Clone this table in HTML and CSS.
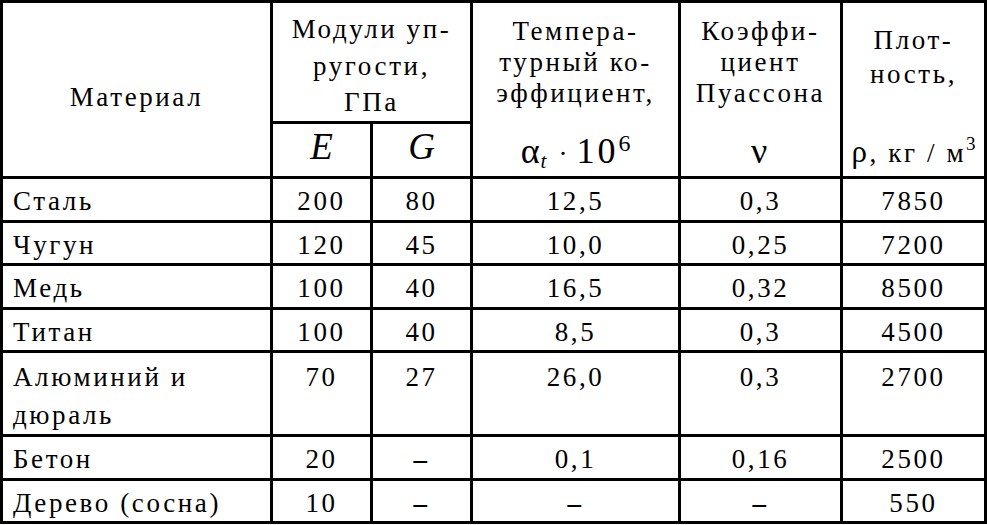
FILE: index.html
```html
<!DOCTYPE html>
<html lang="ru">
<head>
<meta charset="utf-8">
<title>Механические характеристики материалов</title>
<link rel="stylesheet" href="styles.css">
</head>
<body>
<table class="props">
  <colgroup>
    <col class="c-mat">
    <col class="c-e">
    <col class="c-g">
    <col class="c-t">
    <col class="c-p">
    <col class="c-d">
  </colgroup>
  <thead>
    <tr class="head-top">
      <th rowspan="2" class="h-mat">Материал</th>
      <th colspan="2" class="h-mod">Модули уп-<br>ругости,<br>ГПа</th>
      <th rowspan="2" class="h-tall">
        <div class="lines">Темпера-<br>турный ко-<br>эффициент,</div>
        <div class="sym sym-t"><span class="alpha">α</span><span class="sub">t</span><span class="dot">·</span><span class="big">10</span><span class="sup">6</span></div>
      </th>
      <th rowspan="2" class="h-tall">
        <div class="lines">Коэффи-<br>циент<br>Пуассона</div>
        <div class="sym"><span class="nu">ν</span></div>
      </th>
      <th rowspan="2" class="h-tall">
        <div class="lines lines-d">Плот-<br>ность,</div>
        <div class="sym sym-d"><span class="rho">ρ</span>, кг / м<span class="sup3">3</span></div>
      </th>
    </tr>
    <tr class="head-sub">
      <th class="h-var">E</th>
      <th class="h-var">G</th>
    </tr>
  </thead>
  <tbody>
    <tr class="row"><td class="name">Сталь</td><td>200</td><td>80</td><td>12,5</td><td>0,3</td><td>7850</td></tr>
    <tr class="row"><td class="name">Чугун</td><td>120</td><td>45</td><td>10,0</td><td>0,25</td><td>7200</td></tr>
    <tr class="row"><td class="name">Медь</td><td>100</td><td>40</td><td>16,5</td><td>0,32</td><td>8500</td></tr>
    <tr class="row"><td class="name">Титан</td><td>100</td><td>40</td><td>8,5</td><td>0,3</td><td>4500</td></tr>
    <tr class="row-tall"><td class="name">Алюминий и<br>дюраль</td><td>70</td><td>27</td><td>26,0</td><td>0,3</td><td>2700</td></tr>
    <tr class="row"><td class="name">Бетон</td><td>20</td><td class="dash">–</td><td>0,1</td><td>0,16</td><td>2500</td></tr>
    <tr class="row"><td class="name">Дерево (сосна)</td><td>10</td><td class="dash">–</td><td class="dash">–</td><td class="dash">–</td><td>550</td></tr>
  </tbody>
</table>
</body>
</html>
```

FILE: styles.css
```css
html, body {
  margin: 0;
  padding: 0;
  background: #fff;
}

body {
  font-family: "Liberation Serif", "Times New Roman", serif;
  color: #000;
}

.props {
  border-collapse: collapse;
  table-layout: fixed;
  width: 987px;
  font-size: 27px;
  letter-spacing: 2.6px;
}

.c-mat { width: 270px; }
.c-e { width: 100px; }
.c-g { width: 100px; }
.c-t { width: 208px; }
.c-p { width: 162px; }
.c-d { width: 144px; }

.props th,
.props td {
  border: 3px solid #000;
  padding: 0;
  vertical-align: top;
  text-align: center;
  font-weight: normal;
  line-height: 31px;
}

.head-top { height: 121px; }
.head-sub { height: 55px; }
.row { height: 43.5px; }
.row-tall { height: 84px; }

.props .h-mat {
  padding-top: 79px;
}

.props .h-mod {
  padding-top: 8px;
  line-height: 36.5px;
}

.props .h-var {
  font-size: 37px;
  font-style: italic;
  line-height: 40px;
  padding-top: 3px;
  letter-spacing: 0;
}

.props .h-tall {
  padding-top: 13px;
}

.lines {
  line-height: 31px;
}

.lines-d {
  margin-top: 7px;
  line-height: 34px;
}

.sym {
  margin-top: 30px;
  line-height: 31px;
}

.sym-t {
  letter-spacing: 0;
}

.sym-d {
  margin-top: 47px;
}

.alpha {
  font-size: 36px;
  line-height: 0;
  margin-right: 1px;
}

.dot {
  margin: 0 9px 0 12px;
}

.big {
  font-size: 36px;
  line-height: 0;
  letter-spacing: 3px;
}

.nu {
  font-size: 36px;
  line-height: 0;
}

.rho {
  font-size: 31px;
  line-height: 0;
}

.sub {
  font-size: 21px;
  font-style: italic;
  vertical-align: -5px;
  line-height: 0;
}

.sup {
  font-size: 24px;
  vertical-align: 12px;
  line-height: 0;
}

.sup3 {
  font-size: 19px;
  vertical-align: 12px;
  line-height: 0;
  letter-spacing: 0;
}

.props td {
  padding-top: 4px;
  line-height: 36px;
}

.props .row-tall td {
  padding-top: 5px;
  line-height: 38px;
}

.props td.name {
  text-align: left;
  padding-left: 10px;
}

.props td.dash {
  font-weight: bold;
}
```
